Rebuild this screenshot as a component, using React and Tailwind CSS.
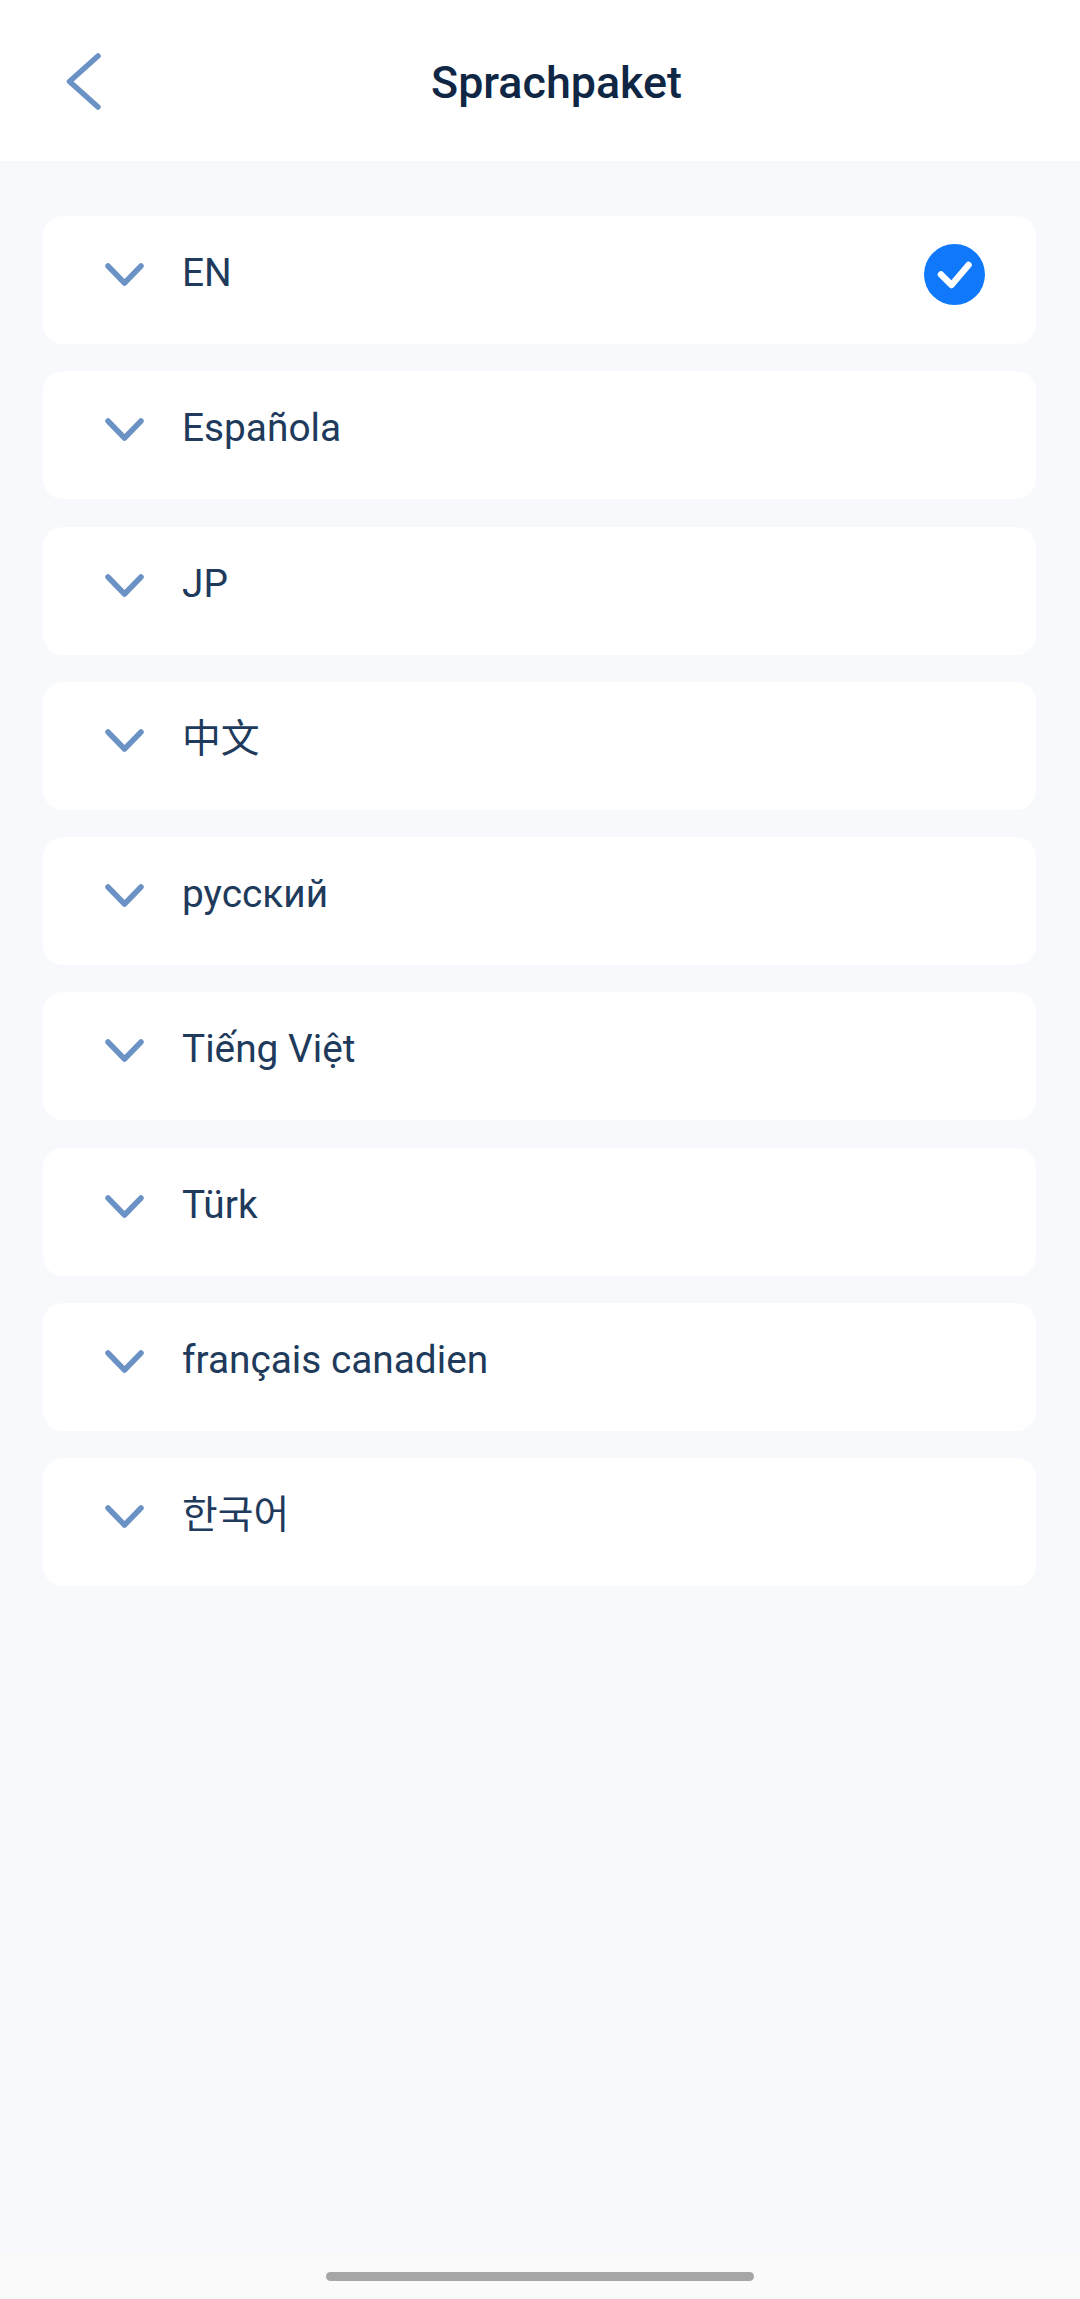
const items = ["EN", "Española", "JP", "中文", "русский", "Tiếng Việt", "Türk", "français canadien", "한국어"];

const font = { fontFamily: 'Roboto, "Noto Sans CJK SC", "Noto Sans CJK KR", sans-serif' };

export default function App() {
  return (
    <div className="w-[1080px] h-[2299px] flex flex-col bg-[#f7f9fd]" style={font}>
      <header className="relative h-[161px] shrink-0 bg-white flex items-center justify-center pl-[33px]">
        <svg className="absolute left-[63px] top-[50px]" width="48" height="64" viewBox="0 0 48 64" fill="none">
          <path d="M35 6 L6.500 31.500 L35 57" stroke="#6b92c4" strokeWidth="5.500" strokeLinecap="round" strokeLinejoin="round" />
        </svg>
        <h1 className="text-[44.800px] leading-[52px] font-medium text-[#0f2744] mt-[4px]">Sprachpaket</h1>
      </header>
      <main className="flex-1 pl-[43px] pt-[55px] flex flex-col gap-[27.250px]">
        {items.map((t, i) => (
          <div key={t} className="h-[128px] w-[993px] bg-white rounded-[20px] flex items-start pl-[62px] pr-[51px] pt-[35px]">
            <svg className="mt-[12px] shrink-0" width="39" height="24" viewBox="0 0 39 24" fill="none">
              <path d="M3 3 L19.500 20 L36 3" stroke="#6b92c4" strokeWidth="5.500" strokeLinecap="round" strokeLinejoin="round" />
            </svg>
            <span className="ml-[38px] text-[38.800px] leading-[44px] text-[#203a5c]">{t}</span>
            {i === 0 && (
              <span className="ml-auto -mt-[7px] w-[61px] h-[61px] rounded-full bg-[#0f78fb] flex items-center justify-center">
                <svg width="36" height="30" viewBox="0 0 36 30" fill="none">
                  <path d="M4 14.500 L14.500 25 L31.500 5" stroke="#ffffff" strokeWidth="6.500" strokeLinecap="round" strokeLinejoin="round" />
                </svg>
              </span>
            )}
          </div>
        ))}
      </main>
      <footer className="h-[46px] shrink-0 bg-[#fafafa] flex justify-center pt-[19px]">
        <div className="w-[428px] h-[9px] rounded-full bg-[#a6a6a6]" />
      </footer>
    </div>
  );
}
